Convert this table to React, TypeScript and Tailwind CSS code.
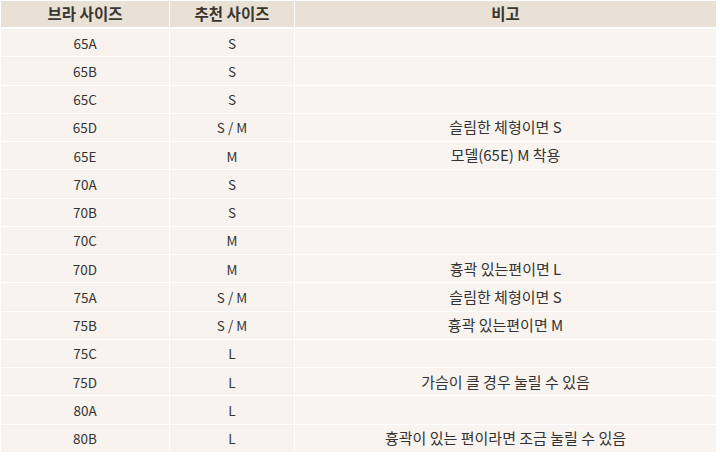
import React from "react";

const rows: [string, string, string][] = [
  ["65A", "S", ""],
  ["65B", "S", ""],
  ["65C", "S", ""],
  ["65D", "S / M", "슬림한 체형이면 S"],
  ["65E", "M", "모델(65E) M 착용"],
  ["70A", "S", ""],
  ["70B", "S", ""],
  ["70C", "M", ""],
  ["70D", "M", "흉곽 있는편이면 L"],
  ["75A", "S / M", "슬림한 체형이면 S"],
  ["75B", "S / M", "흉곽 있는편이면 M"],
  ["75C", "L", ""],
  ["75D", "L", "가슴이 클 경우 눌릴 수 있음"],
  ["80A", "L", ""],
  ["80B", "L", "흉곽이 있는 편이라면 조금 눌릴 수 있음"],
];

export default function App() {
  return (
    <div
      className="w-[720px] h-[457px] bg-white pt-[1px] pl-[1px] overflow-hidden"
      style={{ fontFamily: '"Noto Sans CJK KR", "Noto Sans", sans-serif' }}
    >
      <div className="w-[715px] flex flex-col">
        <div className="grid grid-cols-[168px_124px_1fr] gap-x-[1px] h-[26px] text-[15.5px] font-bold text-[#3a3630]">
          <div className="bg-[#e9e0d6] flex items-center justify-center">브라 사이즈</div>
          <div className="bg-[#e9e0d6] flex items-center justify-center">추천 사이즈</div>
          <div className="bg-[#e9e0d6] flex items-center justify-center">비고</div>
        </div>
        <div className="flex flex-col gap-y-[1px] mt-[2px] text-[13.5px] text-[#333333]">
          {rows.map((r, i) => (
            <div key={i} className="grid grid-cols-[168px_124px_1fr] gap-x-[1px] h-[27.27px]">
              <div className="bg-[#f9f3ef] flex items-center justify-center">{r[0]}</div>
              <div className="bg-[#f9f3ef] flex items-center justify-center">{r[1]}</div>
              <div className="bg-[#f9f4f0] flex items-center justify-center text-[15px]">{r[2]}</div>
            </div>
          ))}
        </div>
      </div>
    </div>
  );
}
